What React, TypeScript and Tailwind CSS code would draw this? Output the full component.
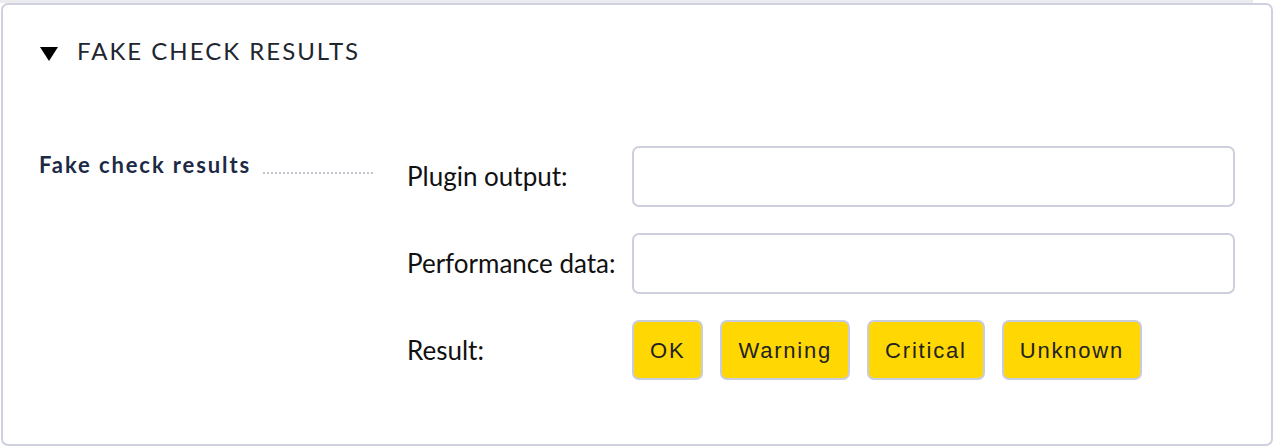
import React from "react";

const Btn = ({ label }: { label: string }) => (
  <button className="h-[60px] px-[16px] border-2 border-[#c9ccdd] rounded-[7px] bg-[#ffd703] text-[#222222] text-[22px] tracking-[1.8px] font-['Liberation_Sans',Arial,sans-serif]">
    {label}
  </button>
);

export default function App() {
  return (
    <div className="w-[1274px] h-[447px] bg-white font-['Lato',sans-serif]">
      <div className="h-[3px] w-[1253px] bg-[#ebebf0]" />
      <div className="ml-[1px] w-[1272px] h-[443px] border-2 border-[#d0d1df] rounded-[7px]">
        <div className="flex items-center h-[40px] mt-[26px] pl-[37px]">
          <svg width="18" height="14" viewBox="0 0 18 14" className="mt-[6px]">
            <polygon points="0,0 18,0 9,14" fill="#000" />
          </svg>
          <span className="ml-[19px] text-[24px] leading-[40px] tracking-[2px] text-[#1e262e]">
            FAKE CHECK RESULTS
          </span>
        </div>
        <div className="flex mt-[75px] pl-[36px]">
          <div className="w-[368px] pr-[32px] flex items-start">
            <span className="pt-[3px] text-[22px] leading-[32px] font-bold tracking-[1.9px] text-[#1c2a45] whitespace-nowrap">
              Fake check results
            </span>
            <div className="flex-1 ml-[12px] mt-[26px] h-[2px] bg-[linear-gradient(to_right,#c4c4cc_2px,transparent_2px)] bg-[length:4px_2px]" />
          </div>
          <div className="flex flex-col gap-[26px]">
            <div className="flex items-center h-[61px]">
              <span className="w-[225px] text-[26px] text-[#111111]">Plugin output:</span>
              <div className="w-[603px] h-[61px] border-2 border-[#cdd0dc] rounded-[7px]" />
            </div>
            <div className="flex items-center h-[61px]">
              <span className="w-[225px] text-[26px] text-[#111111]">Performance data:</span>
              <div className="w-[603px] h-[61px] border-2 border-[#cdd0dc] rounded-[7px]" />
            </div>
            <div className="flex items-center h-[60px]">
              <span className="w-[225px] text-[26px] text-[#111111]">Result:</span>
              <div className="flex gap-[17px]">
                <Btn label="OK" />
                <Btn label="Warning" />
                <Btn label="Critical" />
                <Btn label="Unknown" />
              </div>
            </div>
          </div>
        </div>
      </div>
    </div>
  );
}
